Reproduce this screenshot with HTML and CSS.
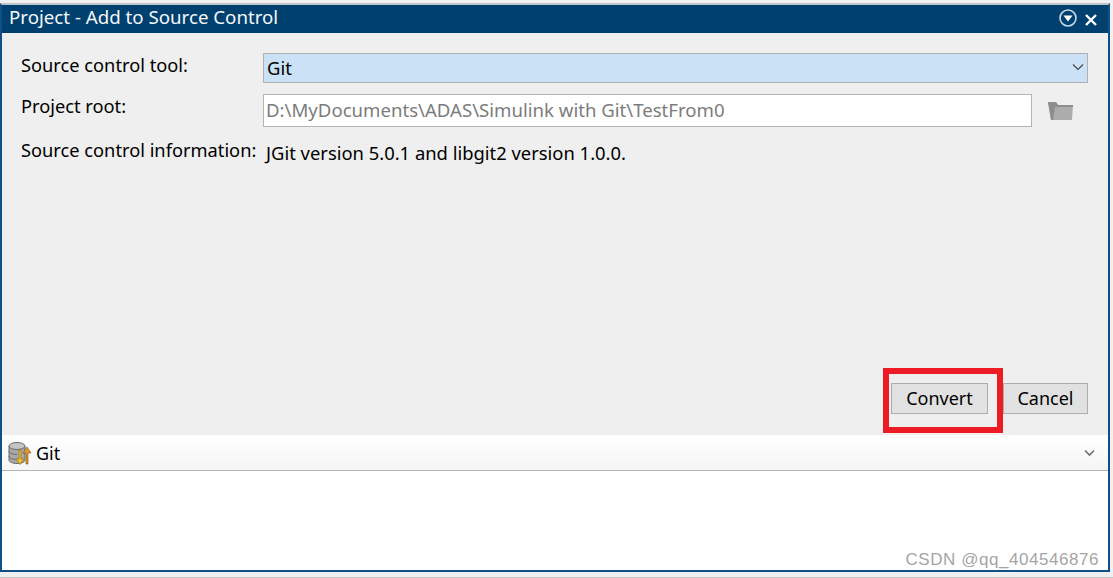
FILE: index.html
```html
<!DOCTYPE html>
<html lang="en">
<head>
    <meta charset="UTF-8">
    <title>Project - Add to Source Control</title>
    <link rel="stylesheet" href="styles.css">
</head>
<body>
    <div class="window">
        <div class="titlebar">
            <span class="title">Project - Add to Source Control</span>
            <svg class="title-icon" width="20" height="20" viewBox="0 0 20 20">
                <circle cx="10" cy="10" r="8" fill="none" stroke="#c5d9e8" stroke-width="1.6"/>
                <path d="M5.5 7.5h9L10 13.5z" fill="#fff"/>
            </svg>
            <svg class="title-icon close-icon" width="14" height="14" viewBox="0 0 14 14">
                <path d="M2 2l10 10M12 2L2 12" stroke="#fff" stroke-width="2.4" fill="none"/>
            </svg>
        </div>

        <div class="panel">
            <div class="form">
                <label class="label">Source control tool:</label>
                <div class="select">
                    <span>Git</span>
                    <svg width="12" height="8" viewBox="0 0 12 8">
                        <path d="M1 1.500l5 5 5-5" stroke="#444" stroke-width="1.100" fill="none"/>
                    </svg>
                </div>

                <label class="label">Project root:</label>
                <div class="root-row">
                    <div class="path-input">D:\MyDocuments\ADAS\Simulink with Git\TestFrom0</div>
                    <svg class="folder" width="25" height="18" viewBox="0 0 25 18">
                        <path d="M0 0h8l2 3h15l-1 15H3z" fill="#acacac"/>
                        <path d="M0 0h8l2 3h15v2H7L5 18H3z" fill="#8e8e8e"/>
                    </svg>
                </div>

                <label class="label">Source control information:</label>
                <div class="info">JGit version 5.0.1 and libgit2 version 1.0.0.</div>
            </div>

            <div class="actions">
                <button class="btn convert">Convert</button>
                <button class="btn">Cancel</button>
            </div>
        </div>

        <div class="log-header">
            <svg width="24" height="24" viewBox="0 0 24 24">
                <path d="M1 5v14c0 2 3.600 3.500 8 3.500s8-1.500 8-3.500V5" fill="#a8a8a8" stroke="#6a6a6a"/>
                <ellipse cx="9" cy="5" rx="8" ry="3.500" fill="#c4c4c4" stroke="#6a6a6a"/>
                <path d="M1 10c0 2 3.600 3.500 8 3.500M1 15c0 2 3.600 3.500 8 3.500" fill="none" stroke="#6a6a6a"/>
                <path d="M11 9v9H8l4 5.500 4-5.500h-3V9z" fill="#f0c020" stroke="#8a6a10" stroke-width=".6"/>
                <path d="M18 23V12h-3l4-6 4 6h-3v11z" fill="#e09a30" stroke="#7a4a10" stroke-width=".6"/>
            </svg>
            <span class="log-title">Git</span>
            <svg class="log-arrow" width="11" height="8" viewBox="0 0 11 8">
                <path d="M1 1.500l4.500 4.500 4.500-4.500" stroke="#707070" stroke-width="1.700" fill="none"/>
            </svg>
        </div>
        <div class="log-body"></div>

        <div class="watermark">CSDN @qq_404546876</div>
    </div>
</body>
</html>
```

FILE: styles.css
```css
* {
    margin: 0;
    padding: 0;
    box-sizing: border-box;
    font-family: 'Noto Sans', sans-serif;
}

html, body {
    height: 578px;
    overflow: hidden;
}

body {
    background: #f0f0f0;
    border-bottom: 1px solid #c8c8c8;
    padding: 3px 3px 5px 0;
}

.window {
    position: relative;
    height: 569px;
    display: flex;
    flex-direction: column;
    border: 2px solid #114f88;
    border-top-color: #c0c4c8;
    color: #000;
}

.titlebar {
    height: 28px;
    flex: none;
    display: flex;
    align-items: center;
    background: #00406f;
    color: #f4f7fa;
    padding: 0 10px 2px 7px;
}

.title {
    font-size: 18.7px;
    flex: 1;
    margin-bottom: 3px;
}

.title-icon {
    margin-left: 6px;
}

.close-icon {
    margin-top: 4px;
}

.panel {
    flex: 1;
    background: #efefef;
    padding: 20px 20px 21px 19px;
    display: flex;
    flex-direction: column;
    justify-content: space-between;
}

.form {
    display: grid;
    grid-template-columns: 242px 1fr;
    grid-template-rows: 30px 33px 30px;
    row-gap: 11px;
    font-size: 18.4px;
}

.label {
    font-size: 18.25px;
    line-height: 24px;
}

.select {
    display: flex;
    align-items: center;
    justify-content: space-between;
    background: #cbe2f6;
    border: 1px solid #b0b0b0;
    padding: 0 3px 2px;
    height: 30px;
}

.root-row {
    display: flex;
    align-items: center;
    gap: 16px;
    padding-right: 15px;
}

.path-input {
    flex: 1;
    height: 33px;
    line-height: 30px;
    background: #fff;
    border: 1px solid #b4b4b4;
    padding-left: 2px;
    color: #7c7c7c;
    font-size: 18.6px;
}

.info {
    padding-left: 3px;
    line-height: 30px;
}

.actions {
    display: flex;
    justify-content: flex-end;
    gap: 15px;
}

.btn {
    height: 31px;
    width: 85px;
    padding-bottom: 2px;
    font-size: 18px;
    background: #e1e1e1;
    border: 1px solid #adadad;
    color: #000;
}

.convert {
    width: 97px;
    position: relative;
}

/* red annotation drawn over the screenshot */
.convert::after {
    content: "";
    position: absolute;
    top: -16px;
    left: -9px;
    right: -16px;
    bottom: -20px;
    border: 6px solid #ed1c24;
}

.log-header {
    height: 36px;
    flex: none;
    display: flex;
    align-items: center;
    gap: 4px;
    padding: 0 13px 0 6px;
    background: linear-gradient(#fff, #f5f5f5);
    border-bottom: 1px solid #b4b4b4;
}

.log-title {
    font-size: 18px;
    flex: 1;
}

.log-body {
    flex: none;
    height: 99px;
    background: #fff;
}

.watermark {
    position: absolute;
    right: 9px;
    bottom: 0;
    font-family: 'Liberation Sans', sans-serif;
    font-size: 17px;
    color: #a5a5a5;
    letter-spacing: 0.55px;
}
```
